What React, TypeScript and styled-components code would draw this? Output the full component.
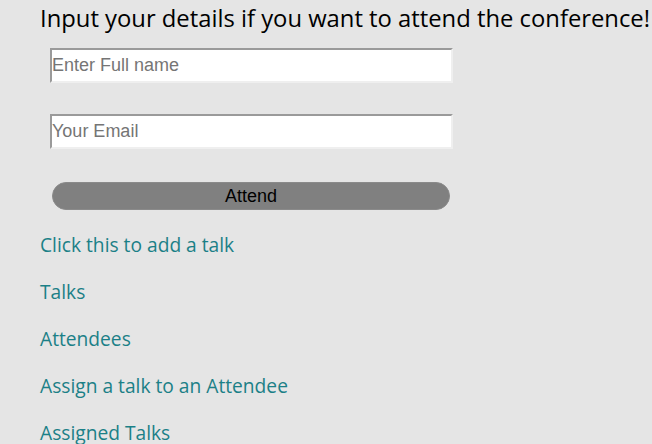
import React from 'react';
import styled, { createGlobalStyle } from 'styled-components';

const GlobalStyle = createGlobalStyle`
  html, body {
    margin: 0;
    background: #e5e5e5;
  }
`;

const Page = styled.div`
  padding: 0 0 0 40px;
  font-family: 'Open Sans', 'Noto Sans', sans-serif;
  overflow: hidden;
  height: 444px;
`;

const Heading = styled.h2`
  margin: 0;
  padding-top: 2px;
  font-size: 23.8px;
  font-weight: 400;
  color: #000;
  line-height: 32px;
  white-space: nowrap;
`;

const Form = styled.form`
  display: flex;
  flex-direction: column;
  padding: 14px 0 0 10px;
`;

const Field = styled.input`
  box-sizing: border-box;
  width: 403px;
  height: 35px;
  margin-bottom: 31px;
  padding: 0;
  border-style: solid;
  border-width: 2px;
  border-color: #9a9a9a #efefef #efefef #9a9a9a;
  background: #fff;
  font-family: 'Liberation Sans', Arial, sans-serif;
  font-size: 18px;
  outline: none;
  &::placeholder {
    color: #757575;
  }
`;

const AttendButton = styled.button`
  box-sizing: border-box;
  width: 398px;
  height: 28px;
  margin: 2px 0 0 2px;
  border: 1px solid #8a8a8a;
  border-radius: 14px;
  background: #808080;
  color: #000;
  font-family: 'Liberation Sans', Arial, sans-serif;
  font-size: 18px;
  padding: 0;
`;

const Links = styled.nav`
  display: flex;
  flex-direction: column;
  gap: 21px;
  padding-top: 22px;
`;

const NavLink = styled.a`
  color: #1b8087;
  font-size: 19.2px;
  line-height: 26px;
  text-decoration: none;
`;

const links = [
  'Click this to add a talk',
  'Talks',
  'Attendees',
  'Assign a talk to an Attendee',
  'Assigned Talks',
];

export default function App() {
  return (
    <>
      <GlobalStyle />
      <Page>
        <Heading>Input your details if you want to attend the conference!</Heading>
        <Form onSubmit={(e) => e.preventDefault()}>
          <Field type='text' placeholder='Enter Full name' />
          <Field type='email' placeholder='Your Email' />
          <AttendButton type='submit'>Attend</AttendButton>
        </Form>
        <Links>
          {links.map((l) => (
            <NavLink key={l} href='#'>
              {l}
            </NavLink>
          ))}
        </Links>
      </Page>
    </>
  );
}
